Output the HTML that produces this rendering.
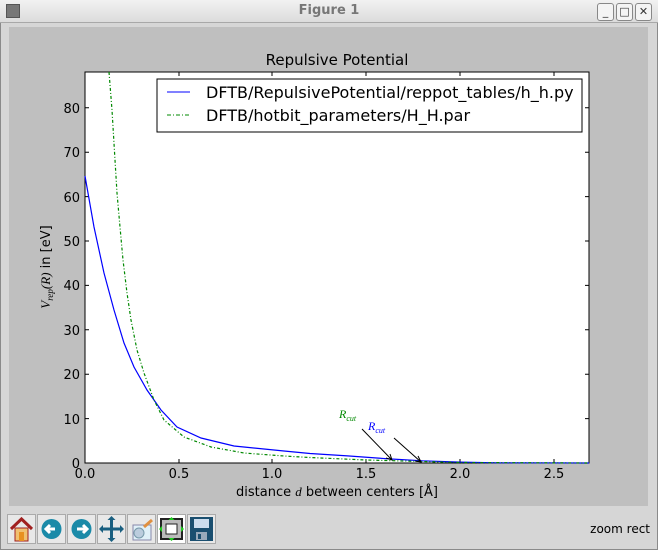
<!DOCTYPE html>
<html><head><style>
body{margin:0;width:658px;height:550px;overflow:hidden;background:#d6d6d6;font-family:"DejaVu Sans","Liberation Sans",sans-serif;position:relative}
.win{position:absolute;left:0;top:0;width:656px;height:548px;border:1px solid #8a8a8a;border-radius:4px 4px 0 0}
.tb{position:absolute;left:0;top:0;width:658px;height:22px;background:linear-gradient(#f2f2f2,#dcdcdc);border-bottom:1px solid #a8a8a8}
.tt{position:absolute;left:0;width:658px;top:3px;text-align:center;font-size:13px;font-weight:bold;color:#777}
.wb{position:absolute;top:3px;width:15px;height:16px;border:1px solid #888;border-radius:3px;background:#f4f4f4;font-size:11px;line-height:16px;text-align:center;color:#333}
.panel{position:absolute;left:9px;top:27px;width:639px;height:479px;background:#bfbfbf}
.btn{position:absolute;top:514px;width:27px;height:28px;border:1px solid #aaa;background:#e8e8e8}
</style></head><body>
<div class="win"></div>
<div class="tb"><div style="position:absolute;left:6px;top:4px;width:12px;height:12px;background:#777;border:1px solid #555"></div><div class="tt">Figure 1</div>
<div class="wb" style="left:597px">_</div><div class="wb" style="left:616px">□</div><div class="wb" style="left:635px">✕</div></div>
<div class="panel"></div>
<svg width="658" height="550" style="position:absolute;left:0;top:0" font-family="DejaVu Sans, Liberation Sans, sans-serif">
<text x="337" y="65" font-size="15" text-anchor="middle">Repulsive Potential</text>
<rect x="85" y="72" width="504" height="391" fill="#fff" stroke="#000" stroke-width="1"/>
<g stroke="#000" stroke-width="1">
<path d="M179 463v-4M272 463v-4M366 463v-4M460 463v-4M554 463v-4M179 72v4M272 72v4M366 72v4M460 72v4M554 72v4"/>
<path d="M85 418.6h4M85 374.2h4M85 329.8h4M85 285.4h4M85 241h4M85 196.6h4M85 152.2h4M85 107.8h4M589 418.6h-4M589 374.2h-4M589 329.8h-4M589 285.4h-4M589 241h-4M589 196.6h-4M589 152.2h-4M589 107.8h-4"/>
</g>
<g font-size="13" text-anchor="end">
<text x="80" y="468">0</text><text x="80" y="424">10</text><text x="80" y="379">20</text><text x="80" y="335">30</text><text x="80" y="290">40</text><text x="80" y="246">50</text><text x="80" y="202">60</text><text x="80" y="157">70</text><text x="80" y="113">80</text>
</g>
<g font-size="13" text-anchor="middle">
<text x="85" y="478">0.0</text><text x="179" y="478">0.5</text><text x="272" y="478">1.0</text><text x="366" y="478">1.5</text><text x="460" y="478">2.0</text><text x="554" y="478">2.5</text>
</g>
<text x="337" y="496" font-size="13" text-anchor="middle">distance <tspan font-family="Liberation Serif,serif" font-style="italic">d</tspan> between centers [Å]</text>
<text transform="translate(50,267) rotate(-90)" font-size="13" text-anchor="middle"><tspan font-family="Liberation Serif,serif" font-style="italic">V<tspan font-size="9" dy="3">rep</tspan><tspan dy="-3">(R)</tspan></tspan> in [eV]</text>
<polyline fill="none" stroke="#00f" stroke-width="1.2" points="85,176 94,227 104,273 114,310 124,343 134,367 147,390 161,410 177,427 201,438 234,446 284,451 310,453.5 347.5,455.9 385,458.6 422.5,460.8 460,462.1 497.5,462.8 589,463"/>
<polyline fill="none" stroke="#080" stroke-width="1.2" stroke-dasharray="3 2 1 2" points="109,72 112,110 115,160 117,193 120,227 123,260 127,293 131,320 137,350 144,373 154,400 164,420 184,437 211,447 244,453 284,456 310,457.5 366,460 422,461.5 460,462.5 589,463"/>
<rect x="157" y="79" width="425" height="53" fill="#fff" stroke="#000"/>
<line x1="167" y1="92" x2="190" y2="92" stroke="#00f"/>
<line x1="167" y1="115" x2="190" y2="115" stroke="#080" stroke-dasharray="4 2 1 2"/>
<text x="206" y="98" font-size="16">DFTB/RepulsivePotential/reppot_tables/h_h.py</text>
<text x="206" y="121" font-size="16">DFTB/hotbit_parameters/H_H.par</text>
<text x="339" y="418" font-size="12" fill="#080" font-family="Liberation Serif,serif" font-style="italic">R<tspan font-size="8" dy="3">cut</tspan></text>
<text x="368" y="430" font-size="12" fill="#00f" font-family="Liberation Serif,serif" font-style="italic">R<tspan font-size="8" dy="3">cut</tspan></text>
<g stroke="#000" fill="none"><path d="M362 429L392 460M386 458l6 2-2-6"/><path d="M394 438L421 462M415 461l6 1-3-6"/></g>
<text x="650" y="533" font-size="12" text-anchor="end">zoom rect</text>
</svg>
<div class="btn" style="left:7px"><svg width="27" height="28"><path d="M3 14L13.5 4 24 14" stroke="#a02020" stroke-width="3" fill="none"/><rect x="7" y="13" width="13" height="13" fill="#f0c070" stroke="#a02020"/><rect x="11" y="17" width="5" height="9" fill="#e89020"/></svg></div>
<div class="btn" style="left:37px"><svg width="27" height="28"><circle cx="13.5" cy="14" r="10" fill="#1a8aa8"/><path d="M17 14H9M12 10l-4 4 4 4" stroke="#fff" stroke-width="3" fill="none"/></svg></div>
<div class="btn" style="left:67px"><svg width="27" height="28"><circle cx="13.5" cy="14" r="10" fill="#1a8aa8"/><path d="M9 14h8M15 10l4 4-4 4" stroke="#fff" stroke-width="3" fill="none"/></svg></div>
<div class="btn" style="left:97px"><svg width="27" height="28"><path d="M13.5 3v22M3 14h21" stroke="#1a5f80" stroke-width="3"/><path d="M13.5 1l-4 4h8zM13.5 27l-4-4h8zM1 14l4-4v8zM26 14l-4-4v8z" fill="#1a5f80"/></svg></div>
<div class="btn" style="left:127px"><svg width="27" height="28"><rect x="5" y="10" width="18" height="15" fill="#e0f0f8" stroke="#88a"/><circle cx="11" cy="18" r="5" fill="#bcd" stroke="#79a"/><path d="M16 12l8-7" stroke="#e09040" stroke-width="3"/></svg></div>
<div class="btn" style="left:157px;background:#fff"><svg width="27" height="28"><rect x="3" y="4" width="21" height="20" fill="#bbb" stroke="#222" stroke-width="2"/><rect x="8" y="9" width="11" height="10" fill="#fff" stroke="#222"/><path d="M13.5 2l-3 3h6zM13.5 26l-3-3h6zM1 14l3-3v6zM26 14l-3-3v6z" fill="#2c2"/></svg></div>
<div class="btn" style="left:187px"><svg width="27" height="28"><rect x="2" y="2" width="23" height="24" fill="#1a4f70"/><rect x="6" y="4" width="15" height="9" fill="#cde"/><rect x="8" y="17" width="11" height="8" fill="#9ab"/><rect x="10" y="19" width="3" height="5" fill="#1a4f70"/></svg></div>
</body></html>
